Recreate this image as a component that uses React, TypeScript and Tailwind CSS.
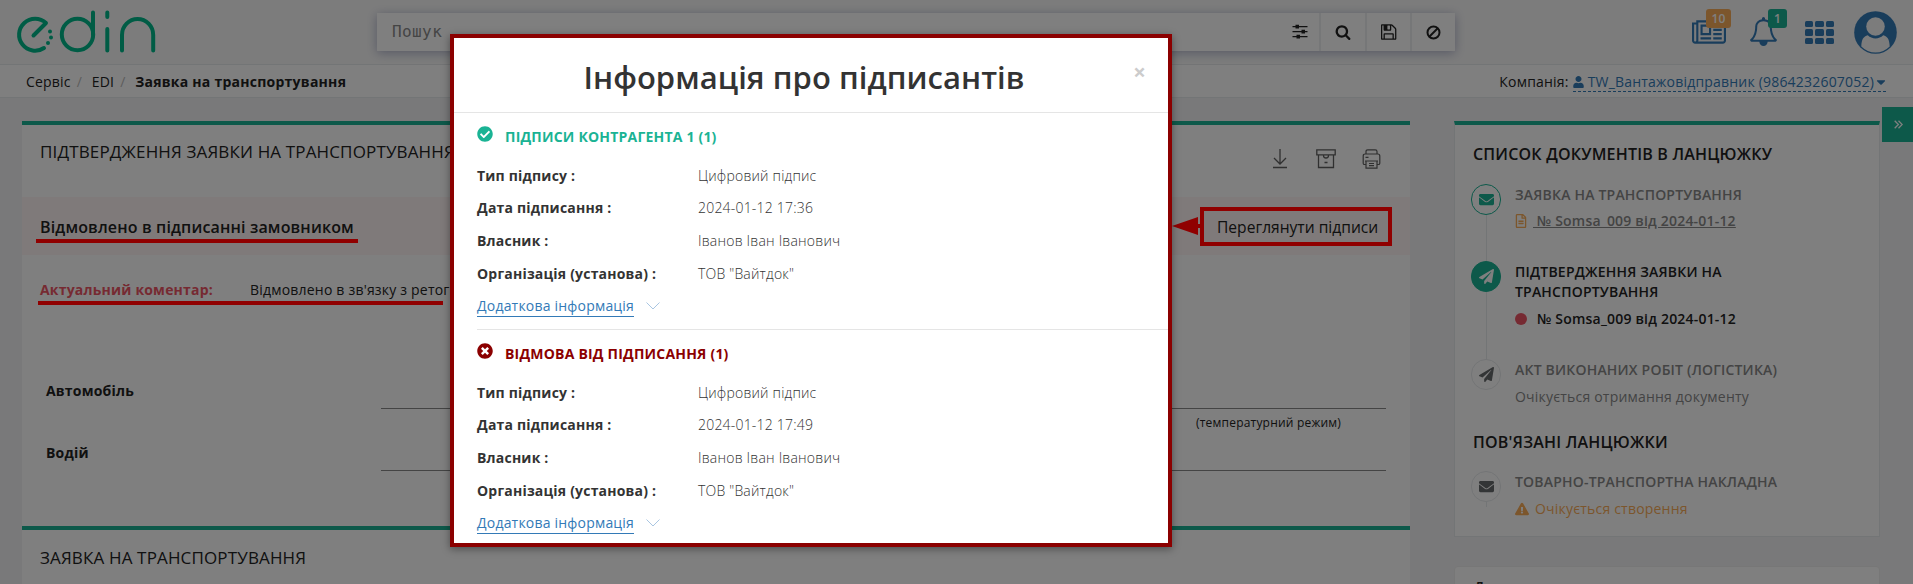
import { ReactNode } from "react";
import { FaEnvelope, FaPaperPlane, FaUser, FaCaretDown, FaExclamationTriangle, FaCheckCircle, FaTimesCircle, FaRegFileAlt } from "react-icons/fa";

const Logo = () => (
  <svg width="140" height="44" viewBox="0 0 140 44" className="ml-[16px]" fill="none" stroke="#00b98b" strokeWidth="4" strokeLinecap="round">
    <path d="M28 38 A16 16 0 1 1 30 13 L17.500 25.500" strokeLinejoin="round" />
    <circle cx="61.500" cy="24.500" r="15.700" />
    <path d="M77 2.500V24.500M91.300 2.500V7M91.300 19V40.500M106 40.500V25A15.600 16 0 0 1 137.200 25V40.500" />
    <g fill="#00b98b" stroke="none">
      <circle cx="34" cy="21.500" r="2" /><circle cx="35" cy="27.500" r="2" /><circle cx="32" cy="33" r="2" />
    </g>
  </svg>
);

const Fa = ({ d, box, w, h, className = "" }: { d: string; box: string; w: number; h: number; className?: string }) => (
  <svg width={w} height={h} viewBox={box} fill="currentColor" className={className}><path d={d} /></svg>
);

const floppy = "M384 1536h768v-384h-768v384zm896 0h128v-896q0-14-10-38.500t-20-34.500l-281-281q-10-10-34-20t-39-10v416q0 40-28 68t-68 28h-576q-40 0-68-28t-28-68v-416h-128v1280h128v-416q0-40 28-68t68-28h832q40 0 68 28t28 68v416zm-384-928v-320q0-13-9.500-22.500t-22.500-9.500h-192q-13 0-22.500 9.500t-9.500 22.500v320q0 13 9.500 22.500t22.500 9.500h192q13 0 22.500-9.500t9.500-22.500zm640 32v928q0 40-28 68t-68 28h-1344q-40 0-68-28t-28-68v-1344q0-40 28-68t68-28h928q40 0 88 20t76 48l280 280q28 28 48 76t20 88z";
const newspaper = "M1024 512h-384v384h384v-384zm128 640v128h-640v-128h640zm0-768v640h-640v-640h640zm640 768v128h-512v-128h512zm0-256v128h-512v-128h512zm0-256v128h-512v-128h512zm0-256v128h-512v-128h512zm-1536 960v-960h-128v960q0 26 19 45t45 19 45-19 19-45zm1664 0v-1088h-1536v1088q0 33-11 64h1483q26 0 45-19t19-45zm128-1216v1216q0 80-56 136t-136 56h-1664q-80 0-136-56t-56-136v-1088h256v-128h1792z";
const bell = "M246 1408h1300q-266-300-266-832 0-51-24-105t-69-103-121.500-80.500-169.500-31.500-169.500 31.500-121.500 80.500-69 103-24 105q0 532-266 832zm1482 0q0 52-38 90t-90 38h-448q0 106-75 181t-181 75-181-75-75-181h-448q-52 0-90-38t-38-90q50-42 91-88t85-119.500 74.500-158.500 50-206 19.500-260q0-152 117-282.500t307-158.500q-8-19-8-39 0-40 28-68t68-28 68 28 28 68q0 20-8 39 190 28 307 158.500t117 282.500q0 139 19.500 260t50 206 74.500 158.500 85 119.500 91 88z";
const search = "M1216 832q0-185-131.500-316.500t-316.500-131.500-316.500 131.500-131.500 316.500 131.500 316.500 316.500 131.500 316.500-131.500 131.500-316.500zm512 832q0 52-38 90t-90 38q-54 0-90-38l-343-342q-179 124-399 124-143 0-273.500-55.500t-225-150-150-225-55.500-273.500 55.500-273.500 150-225 225-150 273.500-55.500 273.500 55.500 225 150 150 225 55.500 273.500q0 220-124 399l343 343q37 37 37 90z";

const Sliders = () => (
  <svg width="16" height="16" viewBox="0 0 16 16" fill="currentColor">
    <path d="M.5 2h15v1.200H.5zM.5 7h15v1.200H.5zM.5 12h15v1.200H.5z" />
    <path d="M3.500 .8h3.500v3.600H3.500zM9.500 5.800h3.500v3.600h-3.500zM4.500 10.800h3.500v3.600h-3.500z" />
  </svg>
);

const Header = () => (
  <header className="flex h-[65px] items-start border-b border-[#e7eaec] bg-[#f9f9f9] text-[#222]">
    <div className="w-[377px] pt-[10px]"><Logo /></div>
    <div className="mt-[13px] flex h-[38px] w-[1078px] gap-[2px] bg-[#eceef0] shadow-[0_2px_10px_rgba(60,70,130,0.4)]">
      <div className="flex flex-1 items-center justify-between bg-white pl-[15px] pr-[11px]">
        <span className="font-['DejaVu_Sans_Mono',monospace] text-[16px] leading-[20px] tracking-[0.4px] text-[#8a8a8a]">Пошук</span>
        <Sliders />
      </div>
      <div className="flex w-[44px] items-center justify-center bg-white"><Fa d={search} box="0 0 1792 1792" w={16} h={16} /></div>
      <div className="flex w-[43px] items-center justify-center bg-white"><Fa d={floppy} box="0 0 1600 1792" w={16} h={18} /></div>
      <div className="flex w-[43px] items-center justify-center bg-white">
        <svg width="15" height="15" viewBox="0 0 15 15" fill="none" stroke="currentColor" strokeWidth="2"><circle cx="7.500" cy="7.500" r="6" /><path d="M3.500 11.500L11.500 3.500" /></svg>
      </div>
    </div>
    <div className="ml-[237px] flex text-[#337ab7]">
      <div className="relative mt-[17px] w-[60px]">
        <Fa d={newspaper} box="0 0 2048 1792" w={34} h={30} className="mt-px" />
        <span className="absolute left-[14px] top-[-8px] flex h-[19px] w-[25px] items-center justify-center rounded-[3px] bg-[#f8ac59] text-[12px] font-semibold text-white">10</span>
      </div>
      <div className="relative mt-[17px] w-[53px]">
        <Fa d={bell} box="0 0 1792 1792" w={29} h={29} className="-ml-[3px]" />
        <span className="absolute left-[16px] top-[-8px] flex h-[19px] w-[19px] items-center justify-center rounded-[3px] bg-[#1ab394] text-[12px] font-semibold text-white">1</span>
      </div>
      <div className="mt-[21px] grid h-[23px] w-[29px] grid-cols-3 grid-rows-3 gap-[2px]">
        {Array.from({ length: 9 }, (_, i) => <i key={i} className="rounded-[1.5px] bg-[#337ab7]" />)}
      </div>
      <svg width="43" height="43" viewBox="0 0 43 43" className="ml-[20px] mt-[10.500px]">
        <circle cx="21.500" cy="21.500" r="21.300" fill="#337ab7" />
        <path d="M7.300 35.500C7.500 28.500 9.500 25.300 13.800 24.300A11 11 0 0 0 29.200 24.300C33.500 25.300 35.500 28.500 35.700 35.500A20 20 0 0 1 7.300 35.500z" fill="#f9f9f9" />
        <circle cx="21.500" cy="15.500" r="9.300" fill="#f9f9f9" />
      </svg>
    </div>
  </header>
);

const Crumbs = () => (
  <nav className="flex h-[33px] items-center justify-between border-b border-[#e7eaec] bg-white pl-[26px] pr-[27px] text-[14px] leading-[20px] text-[#222]">
    <div className="flex pt-[2px]">
      <span>Сервіс</span><span className="w-[21px] pl-[6px] text-[#bbb]">/</span>
      <span>EDI</span><span className="w-[21px] pl-[6px] text-[#bbb]">/</span>
      <b className="tracking-[0.25px]">Заявка на транспортування</b>
    </div>
    <div className="flex pt-[2px]">
      <span className="mr-[4px]">Компанія:</span>
      <span className="flex h-[20px] items-center border-b border-dashed border-[#337ab7] text-[#337ab7]">
        <FaUser className="mr-[4px] h-[12px] w-[11px]" />TW_Вантажовідправник (9864232607052)<FaCaretDown className="ml-[2px] h-[14px] w-[10px]" />
      </span>
    </div>
  </nav>
);

const Actions = () => (
  <div className="flex items-start pr-[29px] pt-[24px] text-[#606060]">
    <svg width="16" height="20" viewBox="0 0 16 20" fill="none" stroke="currentColor" strokeWidth="1.300"><path d="M8 0v15M2 9l6 6 6-6M1 18.500h14" /></svg>
    <svg width="20" height="20" viewBox="0 0 20 20" fill="none" stroke="currentColor" strokeWidth="1.300" className="ml-[28px]"><path d="M.8.800h18.400v5H.8zM2.500 6v12.500h15V6M7.500 6.500q0 2.500 2.500 2.500t2.500-2.500M8.500 13.500h3" /></svg>
    <svg width="19" height="20" viewBox="0 0 18 20" fill="none" stroke="currentColor" strokeWidth="1.200" className="ml-[26px]"><path d="M3.500 5V2.500q0-1.700 1.700-1.700h7.600q1.700 0 1.700 1.700V5M3.500 15.500H2q-1.300 0-1.300-1.300V7q0-2 2-2h12.600q2 0 2 2v7.200q0 1.300-1.300 1.300h-1.500M2.500 12h13M3.500 12v7.200h11V12M6.500 14.500h5M6.500 16.700h5M3 8.300h3" /></svg>
  </div>
);

const Main = () => (
  <main className="mt-[23px] w-[1388px] shrink-0">
    <section className="h-[405px] border-t-4 border-[#1ab394] bg-white text-[14px] leading-[20px] text-[#222]">
      <div className="flex h-[72px] justify-between pl-[18px]">
        <h2 className="pt-[17px] text-[17px] font-medium leading-[20px] tracking-[0.15px]">ПІДТВЕРДЖЕННЯ ЗАЯВКИ НА ТРАНСПОРТУВАННЯ</h2>
        <Actions />
      </div>
      <div className="flex h-[58px] items-center justify-between bg-[#fff5f4] pl-[18px] pt-[2px] text-[16px]">
        <b className="font-semibold tracking-[0.160px]">Відмовлено в підписанні замовником</b>
        <span className="w-[193px] whitespace-nowrap text-[15.600px] tracking-normal">Переглянути підписи</span>
      </div>
      <div className="flex h-[106px] pl-[18px] pt-[25px]">
        <b className="w-[210px] text-[#ed5565]">Актуальний коментар:</b>
        <span className="whitespace-nowrap">Відмовлено в зв'язку з ретогрі</span>
      </div>
      <div className="flex h-[62px] px-[24px]">
        <b className="w-[335px] pt-[20px]">Автомобіль</b>
        <div className="h-[48px] flex-1 border-b border-[#888]" />
      </div>
      <div className="flex h-[62px] px-[24px]">
        <b className="w-[335px] pt-[20px]">Водій</b>
        <div className="h-[48px] flex-1 border-b border-[#888] pr-[45px] text-right text-[12px] leading-[0px]">(температурний режим)</div>
      </div>
    </section>
    <section className="h-[58px] border-t-4 border-[#1ab394] bg-white pl-[18px] pt-[18px]">
      <h2 className="text-[17px] font-medium leading-[20px] tracking-[0.15px] text-[#222]">ЗАЯВКА НА ТРАНСПОРТУВАННЯ</h2>
    </section>
  </main>
);

const Step = ({ icon, tone, line, title, children, h }: { icon: ReactNode; tone: string; line: string; title: ReactNode; children: ReactNode; h: string }) => (
  <div className={`flex ${h}`}>
    <div className="flex w-[44px] shrink-0 flex-col items-start">
      <div className={`flex h-[31px] w-[30px] shrink-0 items-center justify-center rounded-full border text-[15px] ${tone}`}>{icon}</div>
      <div className={`ml-[15px] w-px bg-[#e7eaec] ${line}`} />
    </div>
    <div className="pt-px text-[14px] leading-[20px]">{title}{children}</div>
  </div>
);

const Side = () => (
  <aside className="ml-[44px] mt-[23px] w-[426px] shrink-0">
    <section className="h-[416px] border border-t-4 border-[#e7eaec] border-t-[#1ab394] bg-white pl-[16px] pt-[19px] text-[#222]">
      <h3 className="pl-[2px] text-[16px] font-semibold leading-[20px]">СПИСОК ДОКУМЕНТІВ В ЛАНЦЮЖКУ</h3>
      <div className="mt-[20px]">
        <Step h="h-[77px]" line="flex-1" tone="border-[#1ab394] text-[#1ab394]" icon={<FaEnvelope />}
          title={<div className="font-semibold text-[#888]">ЗАЯВКА НА ТРАНСПОРТУВАННЯ</div>}>
          <div className="mt-[6px] flex items-center font-semibold text-[#888]">
            <FaRegFileAlt className="mr-[6px] h-[14px] w-[12px] text-[#f8ac59]" /><span className="whitespace-pre underline"> № Somsa_009 від 2024-01-12</span>
          </div>
        </Step>
        <Step h="h-[98px]" line="flex-1" tone="border-[#1ab394] bg-[#1ab394] text-white" icon={<FaPaperPlane />}
          title={<div className="font-semibold">ПІДТВЕРДЖЕННЯ ЗАЯВКИ НА<br />ТРАНСПОРТУВАННЯ</div>}>
          <div className="mt-[7px] flex items-center font-semibold"><i className="mr-[10px] h-[12px] w-[12px] rounded-full bg-[#ed5565]" />№ Somsa_009 від 2024-01-12</div>
        </Step>
        <Step h="h-[73px]" line="h-0" tone="border-[#e7eaec] text-[#676a6c]" icon={<FaPaperPlane />}
          title={<div className="font-semibold text-[#888]">АКТ ВИКОНАНИХ РОБІТ (ЛОГІСТИКА)</div>}>
          <div className="mt-[7px] text-[#888]">Очікується отримання документу</div>
        </Step>
      </div>
      <h3 className="pl-[2px] text-[16px] font-semibold leading-[20px]">ПОВ'ЯЗАНІ ЛАНЦЮЖКИ</h3>
      <div className="mt-[19px]">
        <Step h="h-[50px]" line="h-[5px]" tone="border-[#e7eaec] text-[#676a6c]" icon={<FaEnvelope />}
          title={<div className="font-semibold text-[#888]">ТОВАРНО-ТРАНСПОРТНА НАКЛАДНА</div>}>
          <div className="mt-[7px] flex items-center text-[#f8ac59]"><FaExclamationTriangle className="mr-[6px]" />Очікується створення</div>
        </Step>
      </div>
    </section>
    <section className="mt-[29px] h-[40px] rounded-[4px] border border-[#eee] bg-white pl-[19px] pt-[10px] text-[14px] font-semibold leading-[20px] text-[#222]">Д</section>
  </aside>
);

const rows = (time: string) => [
  ["Тип підпису :", "Цифровий підпис"],
  ["Дата підписання :", `2024-01-12 ${time}`],
  ["Власник :", "Іванов Іван Іванович"],
  ["Організація (установа) :", 'ТОВ "Вайтдок"'],
];

const Signature = ({ icon, title, time, tone }: { icon: ReactNode; title: string; time: string; tone: string }) => (
  <div className="ml-[23px] h-[216px]">
    <div className={`flex h-[46.400px] text-[14px] font-bold leading-[20px] ${tone}`}>
      <span className="mr-[12px] mt-[13px] text-[16px]">{icon}</span><span className="pt-[14.400px]">{title}</span>
    </div>
    {rows(time).map(([k, v]) => (
      <div key={k} className="flex h-[32.700px] items-center text-[14px] leading-[20px] text-[#333]">
        <b className="w-[221px]">{k}</b><span className="font-light">{v}</span>
      </div>
    ))}
    <div className="flex h-[33px] items-center text-[14px] leading-[20px] text-[#337ab7]">
      <span className="border-b border-[#337ab7]">Додаткова інформація</span>
      <svg width="14" height="8" viewBox="0 0 14 8" className="mb-[2px] ml-[12px]" fill="none" stroke="#a9c6e2"><path d="M.5.500L7 7 13.500.500" /></svg>
    </div>
  </div>
);

const Dialog = () => (
  <div className="absolute left-[450px] top-[34px] h-[513px] w-[722px] border-4 border-[#8b0000] bg-white shadow-[0_2px_8px_rgba(0,0,0,0.4)]">
    <div className="relative h-[75px] border-b border-[#e5e5e5] text-center">
      <h1 className="pr-[14px] pt-[19px] text-[31px] font-semibold leading-[40px] tracking-[0.050px] text-[#333]">Інформація про підписантів</h1>
      <span className="absolute right-[22px] top-[22px] text-[22px] font-bold leading-none text-[#ccc]">×</span>
    </div>
    <Signature icon={<FaCheckCircle />} title="ПІДПИСИ КОНТРАГЕНТА 1 (1)" time="17:36" tone="text-[#1ab394]" />
    <div className="ml-[23px] h-px bg-[#e5e5e5]" />
    <Signature icon={<FaTimesCircle />} title="ВІДМОВА ВІД ПІДПИСАННЯ (1)" time="17:49" tone="text-[#8b0000]" />
  </div>
);

export default function App() {
  return (
    <div className="relative h-[584px] w-[1913px] overflow-hidden bg-[#f3f3f4] font-['Open_Sans',sans-serif] tracking-[0.2px]">
      <Header />
      <Crumbs />
      <div className="flex pl-[22px]"><Main /><Side /></div>
      <div className="absolute right-0 top-[107px] flex h-[35px] w-[31px] items-center justify-center bg-[#1ab394] text-white">
        <svg width="9" height="9" viewBox="0 0 9 9" fill="none" stroke="currentColor" strokeWidth="1.300" className="ml-[2px]"><path d="M.7.700l3.700 3.800L.7 8.300M4.500.700l3.700 3.800-3.700 3.800" /></svg>
      </div>
      <div className="absolute inset-0 bg-black/50" />
      <div className="absolute left-[36px] top-[239px] h-[4px] w-[322px] bg-[#900000]" />
      <div className="absolute left-[38px] top-[301px] h-[4px] w-[405px] bg-[#900000]" />
      <div className="absolute left-[1200px] top-[207px] h-[39px] w-[192px] border-4 border-[#900000]" />
      <svg className="absolute left-[1172px] top-[217px]" width="29" height="18" viewBox="0 0 29 18" fill="#900000"><path d="M0 9L26 0V7H29V11H26V18z" /></svg>
      <Dialog />
    </div>
  );
}
